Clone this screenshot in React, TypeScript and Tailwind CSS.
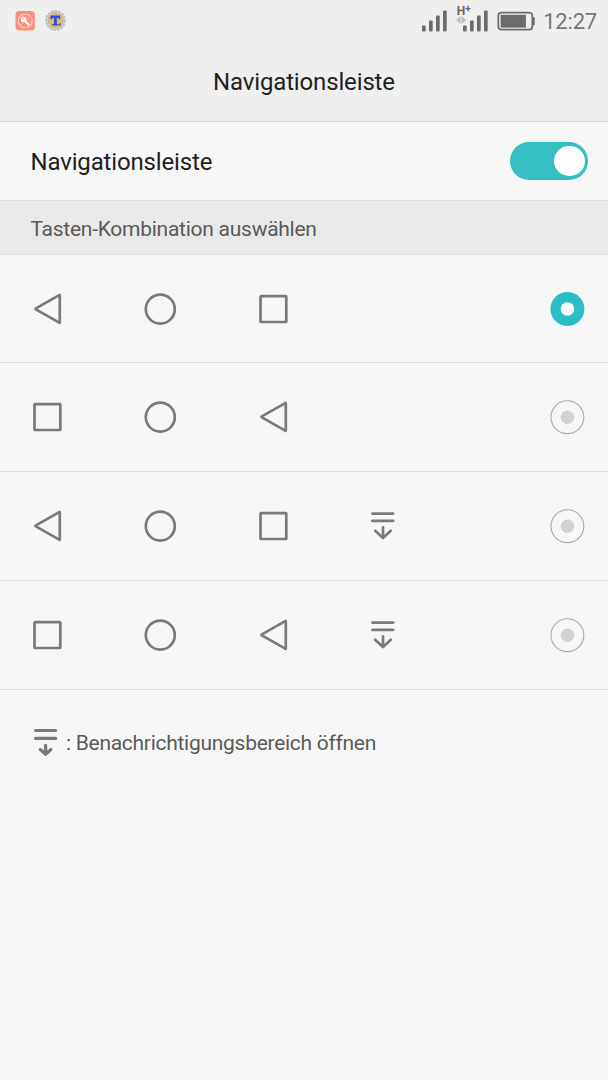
import { useState } from "react";

type NavKey = "back" | "home" | "recent" | "panel";

// ============================================================
// DATEN
// ============================================================
const COMBINATIONS: NavKey[][] = [
  ["back", "home", "recent"],
  ["recent", "home", "back"],
  ["back", "home", "recent", "panel"],
  ["recent", "home", "back", "panel"],
];

// ============================================================
// ICONS
// ============================================================
function NavIcon({ name }: { name: NavKey }) {
  return (
    <svg
      className="h-8 w-8 shrink-0"
      viewBox="0 0 32 32"
      fill="none"
      stroke="#7a7a7a"
      strokeWidth="2.7"
      strokeLinejoin="round"
      strokeLinecap="round"
    >
      {name === "back" && <path d="M28.8 2.4q0-.6-.6-.3L4.9 15.4q-.8.5 0 1L28.2 29.7q.6.3.6-.3z" />}
      {name === "home" && <circle cx="16.3" cy="16.1" r="14.5" />}
      {name === "recent" && <rect x="3.5" y="3.2" width="25.8" height="25.8" rx="0.6" />}
      {name === "panel" && <path d="M2.4 3.6h20.8M2.4 10.9h20.8M13 17.3v10.8M5.2 20.8l7.8 7.3 7.8-7.3" />}
    </svg>
  );
}

function Signal() {
  return (
    <svg className="h-[22px] w-[25px]" viewBox="0 0 25 22" fill="#6c6c6c">
      <rect x="0" y="15.5" width="3.7" height="6" rx="1" />
      <rect x="7" y="10.5" width="3.7" height="11" rx="1" />
      <rect x="14" y="5.5" width="3.7" height="16" rx="1" />
      <rect x="21" y="0.5" width="3.7" height="21" rx="1" />
    </svg>
  );
}

function Battery() {
  return (
    <svg className="h-5 w-[38px]" viewBox="0 0 38 20" fill="none">
      <rect x="1.3" y="1.7" width="34" height="17" rx="3" stroke="#6c6c6c" strokeWidth="1.7" />
      <rect x="3.6" y="3.8" width="25.3" height="12.8" fill="#6c6c6c" />
      <path d="M35.8 6h.7q1.3 0 1.3 1.3v5.8q0 1.3-1.3 1.3h-.7z" fill="#6c6c6c" />
    </svg>
  );
}

function KeyAppIcon() {
  return (
    <svg className="h-5 w-5" viewBox="0 0 20 20" fill="none">
      <rect x="0.5" y="0" width="19.4" height="19.6" rx="4" fill="#fb8f7c" />
      <circle cx="10.2" cy="10" r="7" stroke="#ffd0c5" strokeWidth="1.2" />
      <path d="M5 15L15 5" stroke="#ffc0b2" strokeWidth="1" />
      <circle cx="8.6" cy="8.4" r="2.7" fill="#fff" />
      <path d="M9.7 9.5l4 4.3" stroke="#fff" strokeWidth="2.2" strokeLinecap="round" />
      <circle cx="7.9" cy="7.8" r="0.8" fill="#fb8f7c" />
    </svg>
  );
}

function BackupAppIcon() {
  return (
    <svg className="h-[22px] w-[22px]" viewBox="0 0 22 22" fill="none">
      <circle cx="11.5" cy="10.5" r="9.6" stroke="#b5b7ba" strokeWidth="1.7" strokeDasharray="2.2 1.5" />
      <circle cx="11.5" cy="10.5" r="9" fill="#e2e3e4" stroke="#b4b6ba" strokeWidth="0.8" />
      <circle cx="11.5" cy="10.5" r="7.6" fill="#dbbf78" stroke="#b9a368" strokeWidth="0.7" />
      <path d="M6.4 5.6h9.8v3.6h-1.6V8h-1.8v6h1.6v1.6H8.3V14h1.6V8H8.2v1.2H6.4z" fill="#3548df" />
      <path d="M15 13.4h1.6v2.2H15z" fill="#3548df" />
    </svg>
  );
}

function StatusBar() {
  return (
    <div className="flex h-[42px] items-center pr-[11px] pl-[15px] text-[#777777]">
      <div className="flex items-center gap-[9px]">
        <KeyAppIcon />
        <BackupAppIcon />
      </div>
      <div className="ml-auto flex items-center">
        <Signal />
        <div className="relative ml-[15.5px]">
          <Signal />
          <span className="absolute -top-[5px] -left-[6px] text-[12px] leading-none font-bold text-[#666666]">
            H<sup className="-top-[3px] text-[10px] leading-none">+</sup>
          </span>
          <svg className="absolute top-[6px] -left-[6.5px] h-2 w-[10px]" viewBox="0 0 10 8" fill="#bcbcbc">
            <path d="M0 4L4.5 0v8zM10 4L5.5 0v8z" />
          </svg>
        </div>
        <div className="ml-[9.5px]">
          <Battery />
        </div>
        <span className="ml-[8px] pt-[1px] text-[22px] leading-none tracking-[-0.2px]">12:27</span>
      </div>
    </div>
  );
}

// ============================================================
// BEDIENELEMENTE
// ============================================================
function Toggle({ on, onChange }: { on: boolean; onChange: () => void }) {
  return (
    <button
      role="switch"
      aria-checked={on}
      onClick={onChange}
      className={`flex h-[38px] w-[78px] items-center rounded-full px-[3.5px] ${
        on ? "justify-end bg-[#35bfc5]" : "justify-start bg-[#c8c8c8]"
      }`}
    >
      <span className="h-[30.5px] w-[30.5px] rounded-full bg-white" />
    </button>
  );
}

function Radio({ checked }: { checked: boolean }) {
  return (
    <svg className="h-[36px] w-[36px]" viewBox="0 0 36 36">
      {checked ? (
        <>
          <circle cx="18.4" cy="18" r="17" fill="#2bbec4" />
          <circle cx="18.4" cy="18" r="6.8" fill="#fff" />
        </>
      ) : (
        <>
          <circle cx="18.4" cy="18.2" r="16.4" fill="none" stroke="#aaaaaa" strokeWidth="1.1" />
          <circle cx="18.4" cy="18.2" r="6.8" fill="#d2d2d2" />
        </>
      )}
    </svg>
  );
}

export default function App() {
  const [enabled, setEnabled] = useState(true);
  const [selected, setSelected] = useState(0);

  return (
    <div className="min-h-screen w-full bg-[#f7f7f7] font-[Roboto,sans-serif]">
      <header className="h-[122px] border-b border-[#d8d8d8] bg-[#efefef]">
        <StatusBar />
        <h1 className="flex h-[79px] items-center justify-center text-[24px] tracking-[-0.15px] text-[#1f1f1f]">
          Navigationsleiste
        </h1>
      </header>

      <div className="flex h-[79px] items-center justify-between border-b border-[#dcdcdc] pr-5 pl-[30.5px]">
        <span className="pt-[2px] text-[24px] tracking-[-0.15px] text-[#1f1f1f]">Navigationsleiste</span>
        <Toggle on={enabled} onChange={() => setEnabled(!enabled)} />
      </div>

      <h2 className="flex h-[54px] items-center border-b border-[#dcdcdc] bg-[#e9e9e9] pt-[4px] pl-[30.5px] text-[21px] tracking-[-0.26px] text-[#5a5a5a]">
        Tasten-Kombination auswählen
      </h2>

      <div role="radiogroup">
        {COMBINATIONS.map((keys, i) => (
          <button
            key={i}
            role="radio"
            aria-checked={selected === i}
            onClick={() => setSelected(i)}
            className="flex h-[109px] w-full items-center justify-between border-b border-[#dedede] pr-[23px] pl-[31px] first:h-[108px]"
          >
            <span className="flex gap-[81px]">
              {keys.map((k) => (
                <NavIcon key={k} name={k} />
              ))}
            </span>
            <Radio checked={selected === i} />
          </button>
        ))}
      </div>

      <div className="flex items-center pt-[36px] pl-[33px]">
        <svg
          className="h-8 w-[26px]"
          viewBox="0 0 26 32"
          fill="none"
          stroke="#7a7a7a"
          strokeWidth="3.2"
          strokeLinecap="round"
          strokeLinejoin="round"
        >
          <path d="M2.6 3.5h20M2.6 11.4h20" />
          <path d="M12.6 18.3v9M7.4 22.6l5.2 4.7 5.2-4.7" strokeWidth="3.3" />
        </svg>
        <span className="ml-[7px] pt-[2px] text-[21px] tracking-[-0.28px] text-[#5a5a5a]">
          : Benachrichtigungsbereich öffnen
        </span>
      </div>
    </div>
  );
}
